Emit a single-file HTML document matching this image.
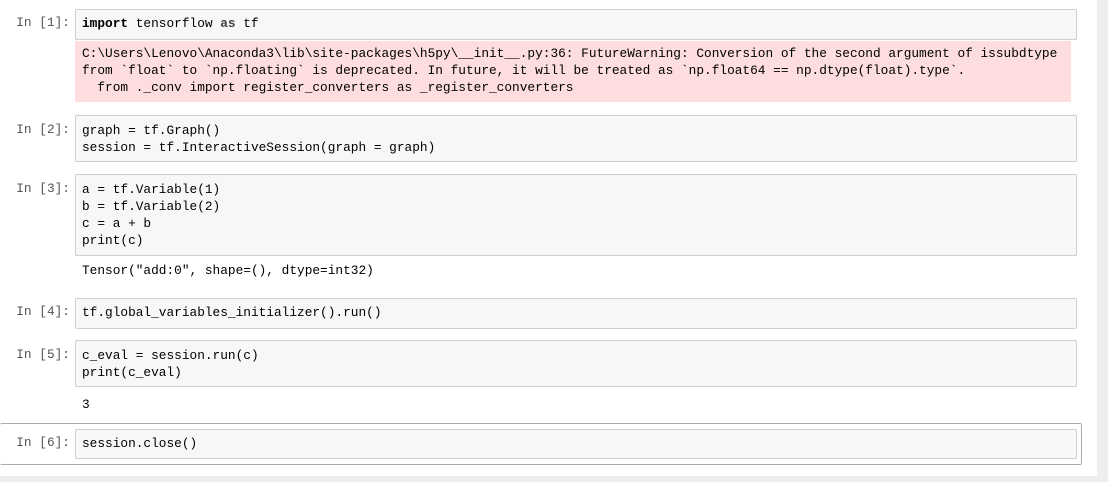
<!DOCTYPE html>
<html><head><style>
body{margin:0;width:1108px;height:482px;background:#fff;position:relative;overflow:hidden;font-family:"Liberation Mono",monospace;font-size:12.8px;color:#000}
.p{position:absolute;right:1038px;color:#555;white-space:pre}
.b{position:absolute;left:75px;width:1000px;background:#f7f7f7;border:1px solid #cfcfcf;border-radius:2px}
.t{position:absolute;left:82px;white-space:pre;line-height:17px}
.k{color:#008000;font-weight:bold}
</style></head><body>
<div style="position:absolute;left:1097px;top:0;width:11px;height:482px;background:#eee"></div>
<div style="position:absolute;left:0;top:476px;width:1108px;height:6px;background:#eee"></div>

<div class="p" style="top:15px">In [1]:</div>
<div class="b" style="top:9px;height:29px"></div>
<div class="t" style="top:15px"><b>import</b> tensorflow <b style="color:#444">as</b> tf</div>
<div style="position:absolute;left:75px;top:41px;width:996px;height:61px;background:#fddddd"></div>
<div class="t" style="top:45px">C:\Users\Lenovo\Anaconda3\lib\site-packages\h5py\__init__.py:36: FutureWarning: Conversion of the second argument of issubdtype
from `float` to `np.floating` is deprecated. In future, it will be treated as `np.float64 == np.dtype(float).type`.
  from ._conv import register_converters as _register_converters</div>

<div class="p" style="top:122px">In [2]:</div>
<div class="b" style="top:115px;height:45px"></div>
<div class="t" style="top:122px">graph = tf.Graph()
session = tf.InteractiveSession(graph = graph)</div>

<div class="p" style="top:181px">In [3]:</div>
<div class="b" style="top:174px;height:80px"></div>
<div class="t" style="top:181px">a = tf.Variable(1)
b = tf.Variable(2)
c = a + b
print(c)</div>
<div class="t" style="top:262px">Tensor("add:0", shape=(), dtype=int32)</div>

<div class="p" style="top:304px">In [4]:</div>
<div class="b" style="top:298px;height:29px"></div>
<div class="t" style="top:304px">tf.global_variables_initializer().run()</div>

<div class="p" style="top:347px">In [5]:</div>
<div class="b" style="top:340px;height:45px"></div>
<div class="t" style="top:347px">c_eval = session.run(c)
print(c_eval)</div>
<div class="t" style="top:396px">3</div>

<div style="position:absolute;left:0;top:423px;width:1081px;height:40px;border:1px solid #ababab;border-left:none;border-radius:2px"></div>
<div class="p" style="top:435px">In [6]:</div>
<div class="b" style="top:429px;height:28px"></div>
<div class="t" style="top:435px">session.close()</div>
</body></html>
